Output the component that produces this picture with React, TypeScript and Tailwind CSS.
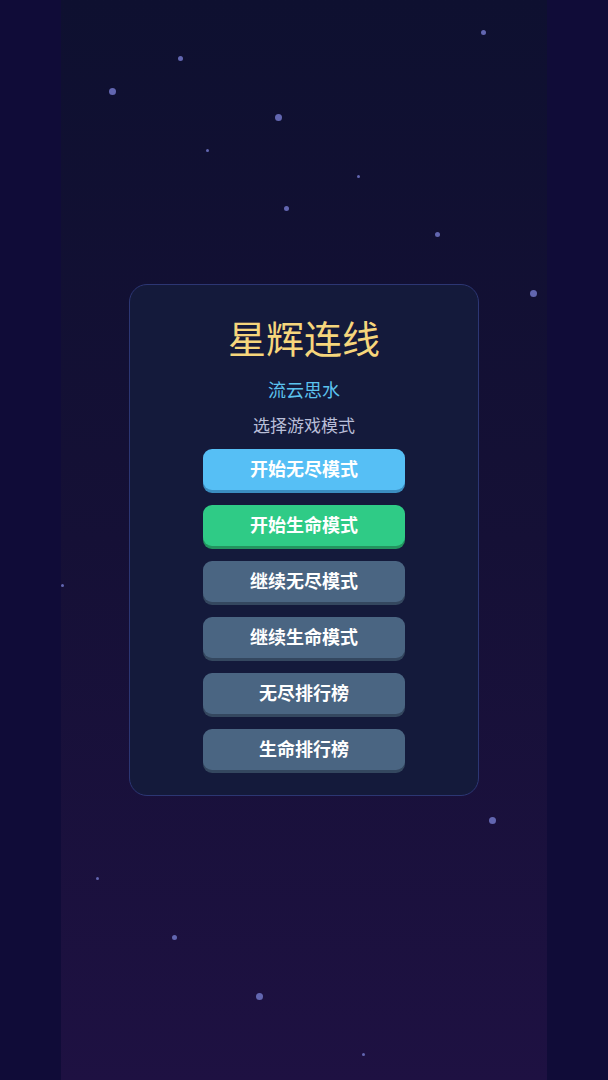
import React from 'react';

const stars = [
  { x: 112, y: 91, s: 7 },
  { x: 180, y: 58, s: 5 },
  { x: 278, y: 117, s: 7 },
  { x: 207, y: 150, s: 3 },
  { x: 286, y: 208, s: 5 },
  { x: 358, y: 176, s: 3 },
  { x: 437, y: 234, s: 5 },
  { x: 483, y: 32, s: 5 },
  { x: 533, y: 293, s: 7 },
  { x: 62, y: 585, s: 3 },
  { x: 492, y: 820, s: 7 },
  { x: 97, y: 878, s: 3 },
  { x: 174, y: 937, s: 5 },
  { x: 259, y: 996, s: 7 },
  { x: 363, y: 1054, s: 3 },
];

const buttons = [
  { label: '开始无尽模式', cls: 'bg-[#56bff5] shadow-[0_3px_0_#3b8dc0]' },
  { label: '开始生命模式', cls: 'bg-[#2fcb86] shadow-[0_3px_0_#23945f]' },
  { label: '继续无尽模式', cls: 'bg-[#4a6582] shadow-[0_3px_0_#34475f]' },
  { label: '继续生命模式', cls: 'bg-[#4a6582] shadow-[0_3px_0_#34475f]' },
  { label: '无尽排行榜', cls: 'bg-[#4a6582] shadow-[0_3px_0_#34475f]' },
  { label: '生命排行榜', cls: 'bg-[#4a6582] shadow-[0_3px_0_#34475f]' },
];

export default function App() {
  return (
    <div
      className="relative h-[1080px] w-full overflow-hidden bg-[#100c38] flex justify-center"
      style={{ fontFamily: '"Noto Sans", "Noto Sans CJK SC", sans-serif' }}
    >
      <div className="w-[486px] h-full bg-gradient-to-b from-[#0e1030] via-[#151036] to-[#1e1142] flex items-center justify-center">
        <div className="relative z-10 w-[350px] rounded-[18px] border border-[#2c3673] bg-[#141a3b] pt-[30px] pb-[25px] flex flex-col items-center">
          <h1 className="text-[38px] leading-[46px] font-normal text-[#f6d67c]">星辉连线</h1>
          <div className="mt-[17px] text-[18px] leading-[24px] text-[#5cc3ee]">流云思水</div>
          <div className="mt-[12px] text-[17px] leading-[24px] text-[#b9bed8]">选择游戏模式</div>
          <div className="mt-[11px] flex flex-col gap-[15px]">
            {buttons.map(b => (
              <button
                key={b.label}
                className={`w-[202px] h-[41px] rounded-[9px] text-white text-[18px] font-bold ${b.cls}`}
              >
                {b.label}
              </button>
            ))}
          </div>
        </div>
      </div>
      {stars.map((st, i) => (
        <span
          key={i}
          className="absolute rounded-full bg-[#6266b0]"
          style={{ left: st.x - st.s / 2, top: st.y - st.s / 2, width: st.s, height: st.s }}
        />
      ))}
    </div>
  );
}
